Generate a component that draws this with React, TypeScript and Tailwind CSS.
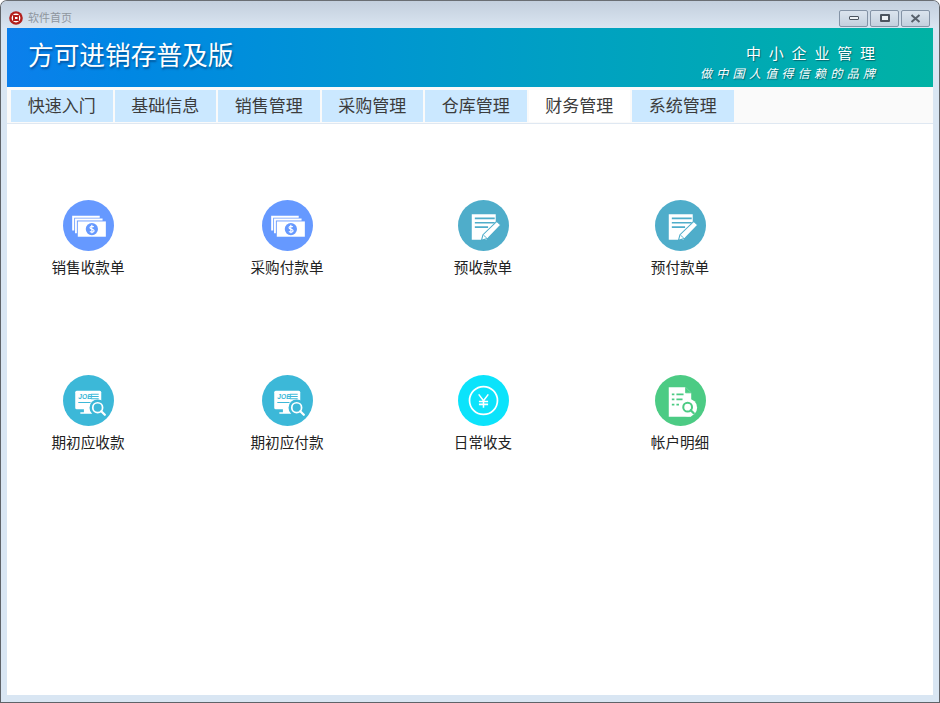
import React from 'react';

const tabs = ['快速入门', '基础信息', '销售管理', '采购管理', '仓库管理', '财务管理', '系统管理'];

function MoneyIcon({ color }: { color: string }) {
    return (
        <svg width="51" height="51" viewBox="0 0 50 50">
            <circle cx="25" cy="25" r="25" fill={color} />
            <path d="M9 15.500h27v1.800H11v12.500H9z" fill="#fff" />
            <path d="M11.800 18.200h27v1.800H13.600v12.500h-1.800z" fill="#fff" />
            <rect x="14.500" y="21" width="27.500" height="15" fill="#fff" />
            <circle cx="28.300" cy="28.500" r="6" fill={color} />
            <path d="M30.300 26.300c-1.500-.9-3.800-.7-3.800.9 0 2 4 1.100 4 3 0 1.500-2.500 1.700-4.200.7M28.300 24.300v8.400" stroke="#fff" strokeWidth="1.100" fill="none" />
        </svg>
    );
}

function NoteIcon({ color }: { color: string }) {
    return (
        <svg width="51" height="51" viewBox="0 0 50 50">
            <circle cx="25" cy="25" r="25" fill={color} />
            <path d="M13.500 14h23.500v13l-7 8-2 4H13.500z" fill="#fff" />
            <path d="M16.500 18h19.500M16.500 22.300h19.500M16.500 26.600h13" stroke={color} strokeWidth="1.600" />
            <path d="M38 21l4 3.500-12.500 13-6.500 2 1.500-5.500z" fill="#fff" stroke={color} strokeWidth="1.100" />
            <path d="M25 34.500l3.200 2.800" stroke={color} strokeWidth="0.900" />
        </svg>
    );
}

function JobIcon({ color }: { color: string }) {
    return (
        <svg width="51" height="51" viewBox="0 0 50 50">
            <circle cx="25" cy="25" r="25" fill={color} />
            <rect x="12" y="15.500" width="25.500" height="18" rx="1.500" fill="#fff" />
            <path d="M20.500 33h8v3.500h3.500V38H17v-1.500h3.500z" fill="#fff" />
            <text x="15" y="23.800" fontSize="6.500" fontWeight="700" fontStyle="italic" fill={color} fontFamily="Liberation Sans, sans-serif">JOB</text>
            <path d="M27.500 18.800h7.500M27.500 21h7.500M27.500 23.300h7.500M15 27h12" stroke={color} strokeWidth="1" />
            <circle cx="34" cy="32" r="8" fill={color} />
            <circle cx="34" cy="32" r="4.800" fill={color} stroke="#fff" strokeWidth="1.700" />
            <path d="M37.500 35.500l3.500 3.500" stroke="#fff" strokeWidth="2.200" strokeLinecap="round" />
        </svg>
    );
}

function YenIcon({ color }: { color: string }) {
    return (
        <svg width="51" height="51" viewBox="0 0 50 50">
            <circle cx="25" cy="25" r="25" fill={color} />
            <circle cx="25" cy="25" r="13.700" fill="none" stroke="#fff" strokeWidth="1.700" />
            <path d="M20.300 19l4.700 6.300 4.700-6.300M25 25.300v6.700M20.500 26h9M20.500 28.800h9" stroke="#fff" strokeWidth="1.500" fill="none" />
        </svg>
    );
}

function LedgerIcon({ color }: { color: string }) {
    return (
        <svg width="51" height="51" viewBox="0 0 50 50">
            <circle cx="25" cy="25" r="25" fill={color} />
            <path d="M13.500 12h16.500l5.500 5.500V41h-22z" fill="#fff" />
            <path d="M30 12v5.500h5.500" fill={color} stroke={color} strokeWidth="0.800" />
            <path d="M16.500 19h2.500M21 19h7M16.500 24h2.500M21 24h6M16.500 29h2.500M21 29h2.500" stroke={color} strokeWidth="1.700" />
            <circle cx="32.500" cy="32" r="8.800" fill="#fff" />
            <circle cx="32" cy="31.500" r="4.300" fill="none" stroke={color} strokeWidth="2" />
            <path d="M35 34.500l3 3" stroke={color} strokeWidth="2.200" strokeLinecap="round" />
        </svg>
    );
}

const rows = [
    [
        { label: '销售收款单', icon: <MoneyIcon color="#6699ff" /> },
        { label: '采购付款单', icon: <MoneyIcon color="#6699ff" /> },
        { label: '预收款单', icon: <NoteIcon color="#4fadca" /> },
        { label: '预付款单', icon: <NoteIcon color="#4fadca" /> },
    ],
    [
        { label: '期初应收款', icon: <JobIcon color="#3cb8d8" /> },
        { label: '期初应付款', icon: <JobIcon color="#3cb8d8" /> },
        { label: '日常收支', icon: <YenIcon color="#0be3fb" /> },
        { label: '帐户明细', icon: <LedgerIcon color="#4ccb84" /> },
    ],
];

export default function App() {
    return (
        <div className="w-[940px] h-[703px] overflow-hidden flex flex-col rounded-t-[7px] border border-[#5f6368] border-t-[#6a6e73] bg-[#d9e6f3] font-['Noto_Sans_CJK_SC','Liberation_Sans',sans-serif]">
            {/* 标题栏 */}
            <div className="h-[27px] shrink-0 pl-[8px] pr-[9px] flex items-center justify-between bg-gradient-to-b from-[#c3cfdd] to-[#dae5f1]">
                <div className="flex items-center gap-[5px] pt-[6px]">
                    <svg width="14" height="14" viewBox="0 0 14 14">
                        <circle cx="7" cy="7" r="6.800" fill="#b3201c" />
                        <circle cx="7" cy="7" r="4.400" fill="#fff" />
                        <rect x="4" y="4" width="6" height="6" fill="#b3201c" />
                        <rect x="6" y="6" width="2.500" height="2" fill="#fff" />
                    </svg>
                    <span className="text-[11px] leading-none text-[#8f969e]">软件首页</span>
                </div>
                <div className="flex gap-[2px] pt-[7px]">
                    <button className="w-[29px] h-[17px] flex items-center justify-center rounded-[2px] border border-[#8493a6] bg-gradient-to-b from-[#dbe4ee] to-[#c3d0de]">
                        <span className="block w-[10px] h-[4px] rounded-[1px] border border-[#4c5560] bg-[#eef2f6]"></span>
                    </button>
                    <button className="w-[29px] h-[17px] flex items-center justify-center rounded-[2px] border border-[#8493a6] bg-gradient-to-b from-[#dbe4ee] to-[#c3d0de]">
                        <span className="block w-[10px] h-[8px] rounded-[1px] border-2 border-[#4c5560] bg-[#eef2f6]"></span>
                    </button>
                    <button className="w-[29px] h-[17px] flex items-center justify-center rounded-[2px] border border-[#8493a6] bg-gradient-to-b from-[#dbe4ee] to-[#c3d0de]">
                        <svg width="11" height="9" viewBox="0 0 11 9">
                            <path d="M1.500 1l8 7M9.500 1l-8 7" stroke="#59626d" strokeWidth="2" />
                        </svg>
                    </button>
                </div>
            </div>

            <div className="flex-1 mx-[6px] mb-[7px] flex flex-col bg-white min-h-0">
                {/* Banner */}
                <div className="h-[59px] shrink-0 flex items-center justify-between pl-[21px] pr-[58px] bg-gradient-to-r from-[#0c7fec] to-[#00b2a4]">
                    <h1 className="text-[25.700px] leading-none font-normal text-white pb-[7px] [text-shadow:1px_2px_2px_rgba(0,40,90,0.5)]">方可进销存普及版</h1>
                    <div className="flex flex-col items-end pt-[8px] text-white [text-shadow:1px_1px_1px_rgba(0,60,70,0.6)]">
                        <span className="text-[15px] leading-[20px] tracking-[7.800px] mr-[-7.800px]">中小企业管理</span>
                        <span className="mt-[2px] text-[12px] leading-[16px] tracking-[4.300px] mr-[-4.300px] italic">做中国人值得信赖的品牌</span>
                    </div>
                </div>

                {/* 菜单 */}
                <div className="h-[37px] shrink-0 flex items-start pt-[3px] pl-[4px] gap-[2px] bg-[#fafafa] border-b border-[#dfe8f2]">
                    {tabs.map((tab) => (
                        <div
                            key={tab}
                            className={`w-[101.500px] h-[32px] flex items-center justify-center pb-[3px] text-[17px] leading-none text-[#3c3c3c] ${tab === '财务管理' ? 'bg-white' : 'bg-[#cbe8ff]'}`}
                        >
                            {tab}
                        </div>
                    ))}
                </div>

                {/* 功能图标 */}
                <div className="flex-1 pl-[31px] pt-[76px] flex flex-col gap-[125px]">
                    {rows.map((row, i) => (
                        <div key={i} className="grid grid-cols-[199px_196px_197px_100px] h-[50px]">
                            {row.map((item) => (
                                <div key={item.label} className="w-[100px] flex flex-col items-center">
                                    {item.icon}
                                    <span className="mt-[7px] text-[14.600px] leading-[18px] text-[#222] whitespace-nowrap">{item.label}</span>
                                </div>
                            ))}
                        </div>
                    ))}
                </div>
            </div>
        </div>
    );
}
